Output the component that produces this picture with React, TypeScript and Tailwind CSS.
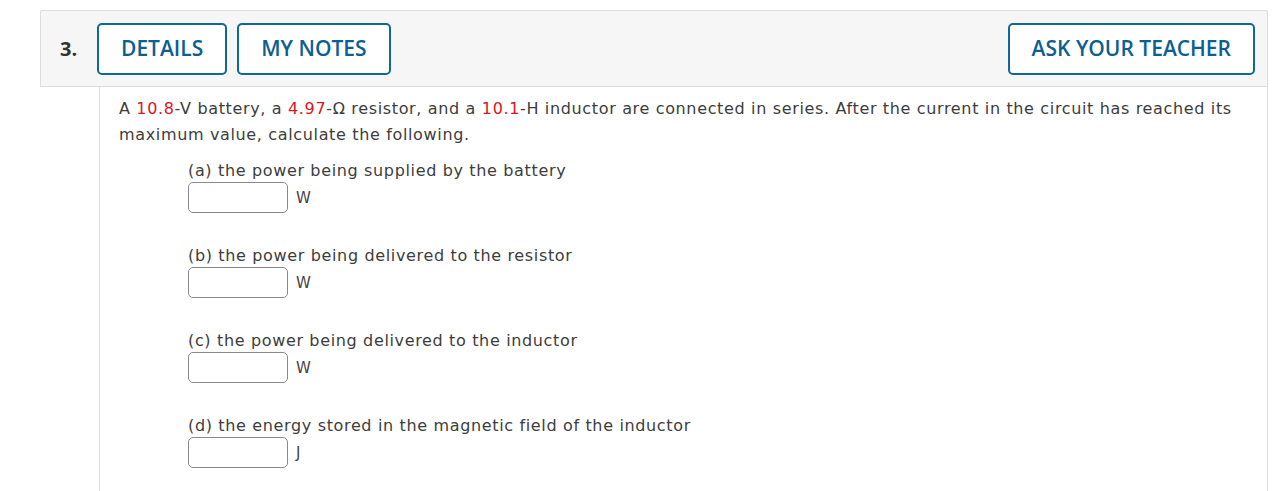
const PARTS = [
  { label: '(a) the power being supplied by the battery', unit: 'W' },
  { label: '(b) the power being delivered to the resistor', unit: 'W' },
  { label: '(c) the power being delivered to the inductor', unit: 'W' },
  { label: '(d) the energy stored in the magnetic field of the inductor', unit: 'J' },
];

function HeaderButton({ children }: { children: string }) {
  return (
    <button
      type="button"
      className="h-[52px] rounded-[5px] border-2 border-[#10679b] bg-white px-[22px] text-[21px] font-semibold text-[#0d5f91]"
      style={{ fontFamily: '"Open Sans", "Noto Sans", sans-serif' }}
    >
      {children}
    </button>
  );
}

export default function App() {
  return (
    <div className="min-h-[491px] bg-white pl-[40px] pr-[18px] pt-[10px]">
      <div className="flex h-[77px] items-center rounded-t-[2px] border border-[#dcdcdc] bg-[#f6f6f6] pl-[19px] pr-[12px]">
        <span
          className="w-[37px] text-[20px] font-bold text-[#333]"
          style={{ fontFamily: '"Open Sans", "Noto Sans", sans-serif' }}
        >
          3.
        </span>
        <div className="flex gap-[10px]">
          <HeaderButton>DETAILS</HeaderButton>
          <HeaderButton>MY NOTES</HeaderButton>
        </div>
        <div className="ml-auto">
          <HeaderButton>ASK YOUR TEACHER</HeaderButton>
        </div>
      </div>

      <div
        className="ml-[59px] min-h-[404px] border-x border-[#dcdcdc] pl-[19px] pr-[28px] pt-[9px] text-[16px] leading-[26px] tracking-[0.65px] text-[#3d3d3d]"
        style={{ fontFamily: '"DejaVu Sans", Verdana, sans-serif' }}
      >
        <p>
          A <span className="text-[#e0141e]">10.8</span>-V battery, a{' '}
          <span className="text-[#e0141e]">4.97</span>-Ω resistor, and a{' '}
          <span className="text-[#e0141e]">10.1</span>-H inductor are connected in series. After the current in
          the circuit has reached its maximum value, calculate the following.
        </p>

        <div className="ml-[69px] mt-[10px] flex flex-col gap-[30px]">
          {PARTS.map((p) => (
            <div key={p.label}>
              <p>{p.label}</p>
              <div className="-mt-[2px] flex items-center gap-[8px]">
                <input
                  type="text"
                  className="h-[31px] w-[100px] rounded-[5px] border border-[#8a8a8a] bg-white"
                />
                <span className="text-[15px] text-[#444]">{p.unit}</span>
              </div>
            </div>
          ))}
        </div>
      </div>
    </div>
  );
}
